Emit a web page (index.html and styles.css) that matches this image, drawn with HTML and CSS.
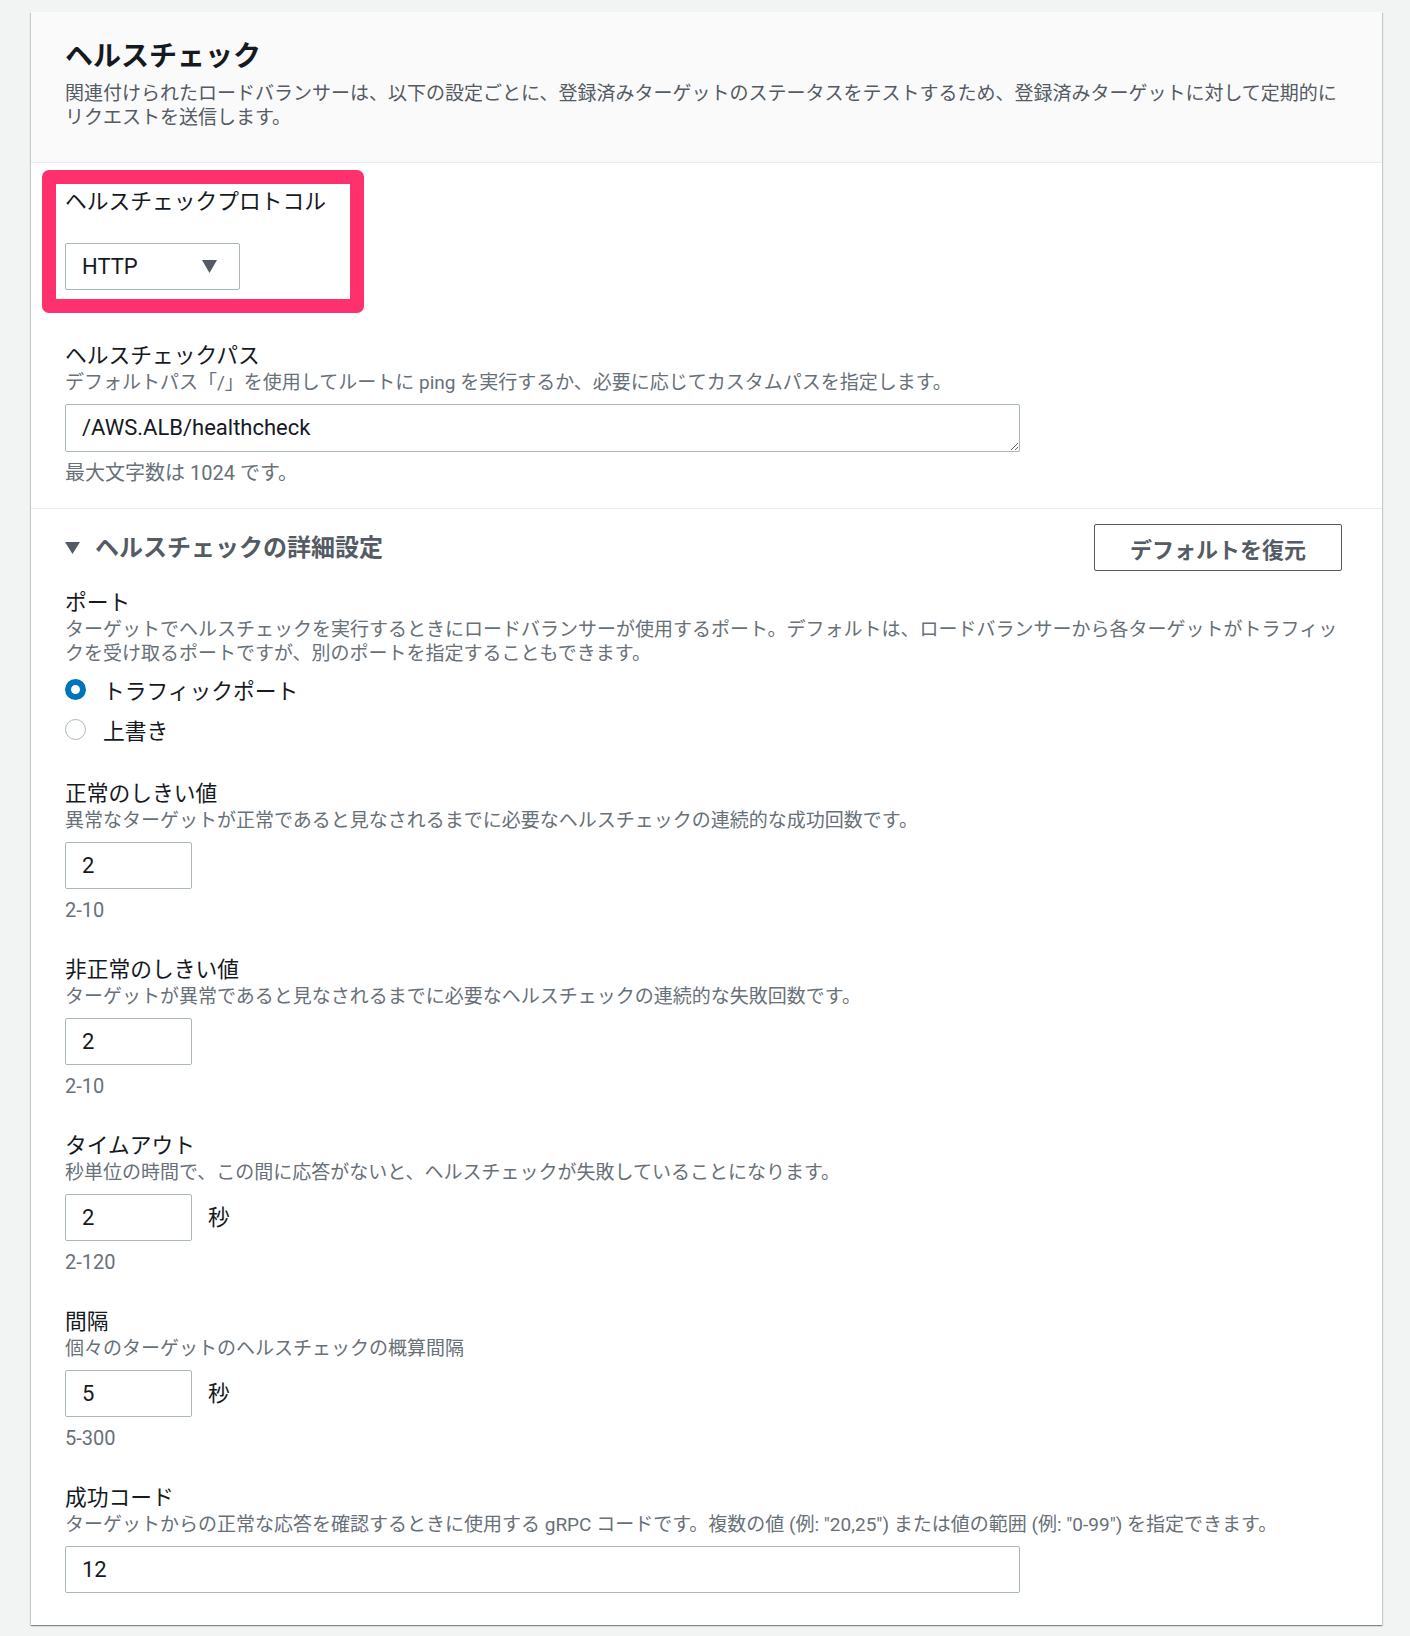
FILE: index.html
```html
<!DOCTYPE html>
<html lang="ja">
<head>
  <meta charset="UTF-8">
  <meta name="viewport" content="width=device-width, initial-scale=1.0">
  <title>ヘルスチェック</title>
  <link rel="stylesheet" href="styles.css">
</head>
<body>
  <div class="page">
    <section class="card">
      <header class="card-header">
        <h2>ヘルスチェック</h2>
        <p class="header-desc">関連付けられたロードバランサーは、以下の設定ごとに、登録済みターゲットのステータスをテストするため、登録済みターゲットに対して定期的にリクエストを送信します。</p>
      </header>

      <div class="card-section">
        <div class="field field-protocol highlighted">
          <label class="field-label">ヘルスチェックプロトコル</label>
          <div class="select">
            <span>HTTP</span>
            <svg width="15" height="13" viewBox="0 0 15 13"><polygon points="0,0 15,0 7.5,13" fill="#545b64"/></svg>
          </div>
        </div>

        <div class="field field-last">
          <label class="field-label" for="hc-path">ヘルスチェックパス</label>
          <div class="field-desc">デフォルトパス「/」を使用してルートに ping を実行するか、必要に応じてカスタムパスを指定します。</div>
          <textarea id="hc-path" class="input input-wide textarea" rows="1">/AWS.ALB/healthcheck</textarea>
          <div class="constraint">最大文字数は 1024 です。</div>
        </div>
      </div>

      <div class="card-section advanced">
        <div class="expand-header">
          <div class="expand-title">
            <svg width="15" height="12" viewBox="0 0 15 12"><polygon points="0,0 15,0 7.5,12" fill="#545b64"/></svg>
            <span>ヘルスチェックの詳細設定</span>
          </div>
          <button class="btn">デフォルトを復元</button>
        </div>

        <div class="field field-port">
          <div class="field-label">ポート</div>
          <div class="field-desc">ターゲットでヘルスチェックを実行するときにロードバランサーが使用するポート。デフォルトは、ロードバランサーから各ターゲットがトラフィックを受け取るポートですが、別のポートを指定することもできます。</div>
          <div class="radio-group">
            <label class="radio"><span class="radio-dot checked"></span>トラフィックポート</label>
            <label class="radio"><span class="radio-dot"></span>上書き</label>
          </div>
        </div>

        <div class="field">
          <label class="field-label" for="healthy">正常のしきい値</label>
          <div class="field-desc">異常なターゲットが正常であると見なされるまでに必要なヘルスチェックの連続的な成功回数です。</div>
          <input id="healthy" class="input input-small" type="text" value="2">
          <div class="constraint">2-10</div>
        </div>

        <div class="field">
          <label class="field-label" for="unhealthy">非正常のしきい値</label>
          <div class="field-desc">ターゲットが異常であると見なされるまでに必要なヘルスチェックの連続的な失敗回数です。</div>
          <input id="unhealthy" class="input input-small" type="text" value="2">
          <div class="constraint">2-10</div>
        </div>

        <div class="field">
          <label class="field-label" for="timeout">タイムアウト</label>
          <div class="field-desc">秒単位の時間で、この間に応答がないと、ヘルスチェックが失敗していることになります。</div>
          <div class="input-row">
            <input id="timeout" class="input input-small" type="text" value="2">
            <span class="unit">秒</span>
          </div>
          <div class="constraint">2-120</div>
        </div>

        <div class="field">
          <label class="field-label" for="interval">間隔</label>
          <div class="field-desc">個々のターゲットのヘルスチェックの概算間隔</div>
          <div class="input-row">
            <input id="interval" class="input input-small" type="text" value="5">
            <span class="unit">秒</span>
          </div>
          <div class="constraint">5-300</div>
        </div>

        <div class="field field-last">
          <label class="field-label" for="codes">成功コード</label>
          <div class="field-desc">ターゲットからの正常な応答を確認するときに使用する gRPC コードです。複数の値 (例: "20,25") または値の範囲 (例: "0-99") を指定できます。</div>
          <input id="codes" class="input input-wide" type="text" value="12">
        </div>
      </div>
    </section>
  </div>
</body>
</html>
```

FILE: styles.css
```css
*,
*::before,
*::after {
  box-sizing: border-box;
}

body {
  margin: 0;
  background-color: #f2f3f3;
  font-family: Roboto, "Noto Sans CJK JP", sans-serif;
  color: #16191f;
}

.page {
  padding: 12px 28px 10px 31px;
}

.card {
  background-color: #fff;
  box-shadow: 0 1px 1px 0 rgba(0, 28, 36, 0.3), 1px 1px 1px 0 rgba(0, 28, 36, 0.15), -1px 1px 1px 0 rgba(0, 28, 36, 0.15);
}

.card-header {
  background-color: #fafafa;
  padding: 28px 34px 32px;
  border-bottom: 1px solid #eaeded;
}

.card-header h2 {
  margin: 0;
  font-size: 28px;
  line-height: 34px;
  font-weight: 700;
}

.header-desc {
  margin: 8px 0 0;
  font-size: 19px;
  line-height: 24px;
  color: #545b64;
}

.card-section {
  padding: 23px 34px;
}

.card-section.advanced {
  border-top: 1px solid #eaeded;
  padding: 15px 34px 32px;
}

.field {
  display: flex;
  flex-direction: column;
  align-items: flex-start;
  margin-bottom: 32px;
}

.field.field-last {
  margin-bottom: 0;
}

.field-protocol {
  margin-bottom: 50px;
}

.field-label {
  display: block;
  font-size: 21.75px;
  line-height: 31px;
  color: #16191f;
}

.field-desc {
  font-size: 19px;
  line-height: 24px;
  color: #687078;
}

.constraint {
  margin-top: 9px;
  font-size: 20px;
  line-height: 24px;
  color: #687078;
}

/* red annotation frame around the protocol field */
.highlighted {
  position: relative;
}

.highlighted::after {
  content: "";
  position: absolute;
  left: -23px;
  top: -16px;
  width: 322px;
  height: 143px;
  border: 14px solid #ff306e;
  border-radius: 7px;
  pointer-events: none;
}

.select {
  margin-top: 26px;
  width: 175px;
  height: 47px;
  display: flex;
  align-items: center;
  justify-content: space-between;
  padding: 0 22px 0 16px;
  border: 1px solid #aab7b8;
  border-radius: 2px;
  font-size: 22px;
  color: #16191f;
}

.select svg {
  display: block;
}

.input {
  margin-top: 9px;
  height: 47px;
  padding: 0 16px;
  border: 1px solid #aab7b8;
  border-radius: 2px;
  font-family: Roboto, "Noto Sans CJK JP", sans-serif;
  font-size: 22px;
  color: #16191f;
  background-color: #fff;
  outline: none;
}

.input-small {
  width: 127px;
}

.input-wide {
  width: 955px;
}

.textarea {
  height: 48px;
  padding: 9px 16px;
  line-height: 28px;
  resize: vertical;
  overflow: hidden;
  display: block;
}

.input-row {
  display: flex;
  align-items: center;
  gap: 16px;
}

.unit {
  margin-top: 9px;
  font-size: 21.75px;
  line-height: 31px;
}

.expand-header {
  display: flex;
  align-items: center;
  justify-content: space-between;
  margin-bottom: 16px;
}

.expand-title {
  display: flex;
  align-items: center;
  gap: 15px;
  font-size: 24px;
  font-weight: 700;
  line-height: 30px;
  color: #545b64;
}

.expand-title svg {
  display: block;
}

.btn {
  margin-right: 6px;
  height: 47px;
  padding: 0 35px;
  background-color: #fff;
  border: 1px solid #545b64;
  border-radius: 2px;
  font-family: Roboto, "Noto Sans CJK JP", sans-serif;
  font-size: 22px;
  font-weight: 700;
  color: #545b64;
  cursor: pointer;
}

.field-port {
  margin-bottom: 29px;
}

.radio-group {
  margin-top: 3px;
  display: flex;
  flex-direction: column;
}

.radio {
  height: 40px;
  display: flex;
  align-items: center;
  gap: 17px;
  font-size: 21.75px;
  color: #16191f;
}

.radio-dot {
  width: 21px;
  height: 21px;
  border-radius: 50%;
  border: 1.5px solid #aab7b8;
  background-color: #fff;
}

.radio-dot.checked {
  border: 6.5px solid #0073bb;
}
```
